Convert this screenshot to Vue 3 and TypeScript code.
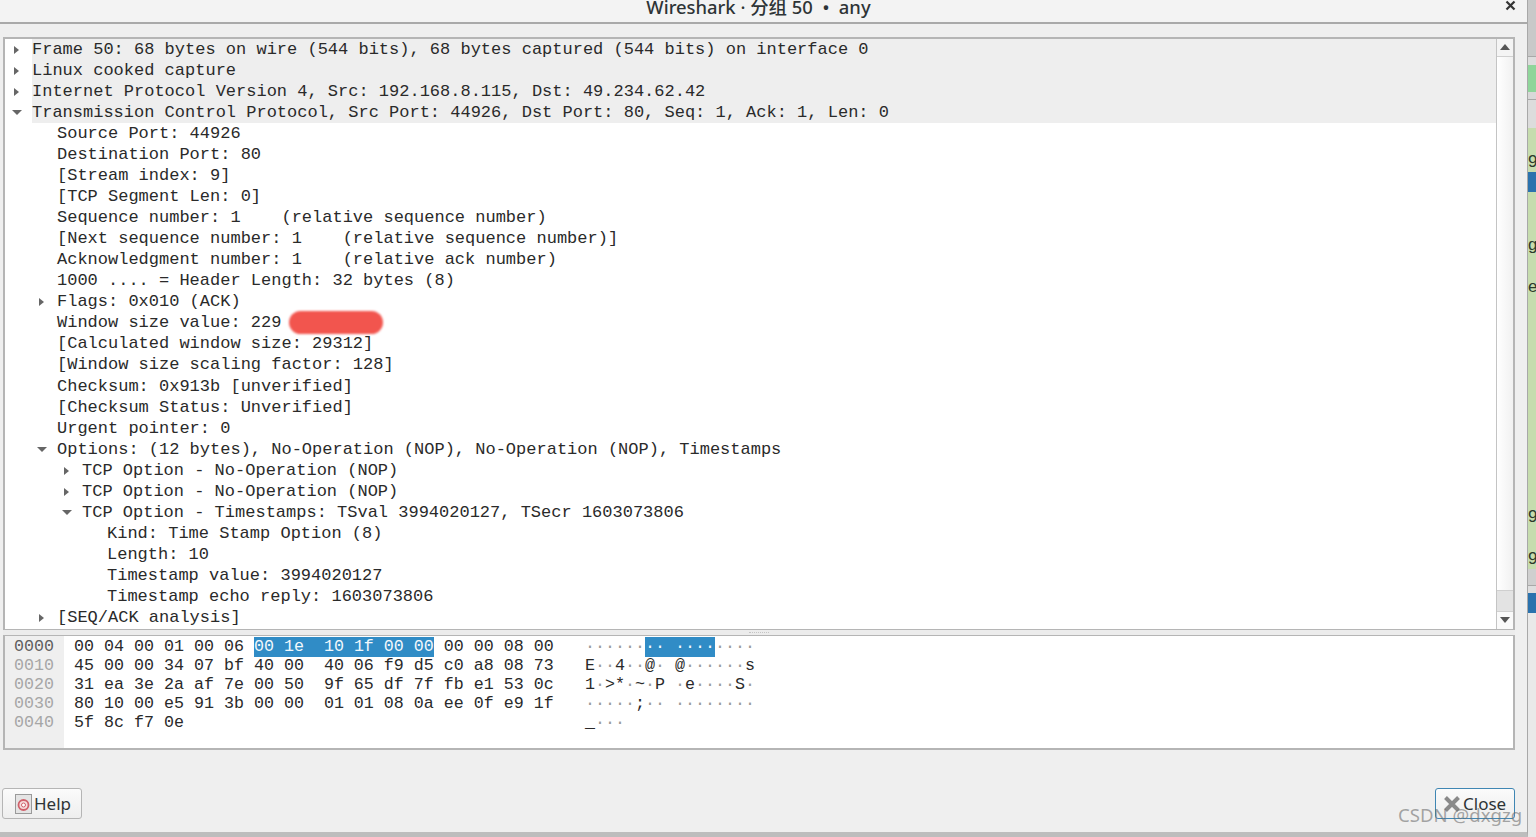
<script setup lang="ts">
interface Row { text: string; indent: number; arrow?: 'right' | 'down'; redact?: boolean; head?: boolean }
interface Seg { text: string; dim: boolean }

const rows: Row[] = [
  { text: 'Frame 50: 68 bytes on wire (544 bits), 68 bytes captured (544 bits) on interface 0', indent: 0, arrow: 'right', head: true },
  { text: 'Linux cooked capture', indent: 0, arrow: 'right', head: true },
  { text: 'Internet Protocol Version 4, Src: 192.168.8.115, Dst: 49.234.62.42', indent: 0, arrow: 'right', head: true },
  { text: 'Transmission Control Protocol, Src Port: 44926, Dst Port: 80, Seq: 1, Ack: 1, Len: 0', indent: 0, arrow: 'down', head: true },
  { text: 'Source Port: 44926', indent: 1 },
  { text: 'Destination Port: 80', indent: 1 },
  { text: '[Stream index: 9]', indent: 1 },
  { text: '[TCP Segment Len: 0]', indent: 1 },
  { text: 'Sequence number: 1    (relative sequence number)', indent: 1 },
  { text: '[Next sequence number: 1    (relative sequence number)]', indent: 1 },
  { text: 'Acknowledgment number: 1    (relative ack number)', indent: 1 },
  { text: '1000 .... = Header Length: 32 bytes (8)', indent: 1 },
  { text: 'Flags: 0x010 (ACK)', indent: 1, arrow: 'right' },
  { text: 'Window size value: 229', indent: 1, redact: true },
  { text: '[Calculated window size: 29312]', indent: 1 },
  { text: '[Window size scaling factor: 128]', indent: 1 },
  { text: 'Checksum: 0x913b [unverified]', indent: 1 },
  { text: '[Checksum Status: Unverified]', indent: 1 },
  { text: 'Urgent pointer: 0', indent: 1 },
  { text: 'Options: (12 bytes), No-Operation (NOP), No-Operation (NOP), Timestamps', indent: 1, arrow: 'down' },
  { text: 'TCP Option - No-Operation (NOP)', indent: 2, arrow: 'right' },
  { text: 'TCP Option - No-Operation (NOP)', indent: 2, arrow: 'right' },
  { text: 'TCP Option - Timestamps: TSval 3994020127, TSecr 1603073806', indent: 2, arrow: 'down' },
  { text: 'Kind: Time Stamp Option (8)', indent: 3 },
  { text: 'Length: 10', indent: 3 },
  { text: 'Timestamp value: 3994020127', indent: 3 },
  { text: 'Timestamp echo reply: 1603073806', indent: 3 },
  { text: '[SEQ/ACK analysis]', indent: 1, arrow: 'right' },
]

const offsets = ['0000', '0010', '0020', '0030', '0040']
const hexRows = [
  { pre: '00 04 00 01 00 06 ', sel: '00 1e  10 1f 00 00', post: ' 00 00 08 00' },
  { pre: '45 00 00 34 07 bf 40 00  40 06 f9 d5 c0 a8 08 73', sel: '', post: '' },
  { pre: '31 ea 3e 2a af 7e 00 50  9f 65 df 7f fb e1 53 0c', sel: '', post: '' },
  { pre: '80 10 00 e5 91 3b 00 00  01 01 08 0a ee 0f e9 1f', sel: '', post: '' },
  { pre: '5f 8c f7 0e', sel: '', post: '' },
]

function segs(s: string): Seg[] {
  const out: Seg[] = []
  for (const ch of s) {
    const dim = ch === '·'
    const last = out[out.length - 1]
    if (last && last.dim === dim) last.text += ch
    else out.push({ text: ch, dim })
  }
  return out
}

const asciiRows = [
  { pre: segs('······'), sel: '·· ····', post: segs('····') },
  { pre: segs('E··4··@· @······s'), sel: '', post: [] as Seg[] },
  { pre: segs('1·>*·~·P ·e····S·'), sel: '', post: [] as Seg[] },
  { pre: segs('·····;·· ········'), sel: '', post: [] as Seg[] },
  { pre: segs('_···'), sel: '', post: [] as Seg[] },
]
</script>

<template>
  <div class="screen">
    <div class="dialog">
      <header class="titlebar">
        <span class="title">Wireshark · 分组 50 &nbsp;•&nbsp; any</span>
        <svg class="x" width="11" height="11" viewBox="0 0 11 11">
          <path d="M1.5 1.5L9.5 9.5M9.5 1.5L1.5 9.5" stroke="#333" stroke-width="2.2" fill="none" />
        </svg>
      </header>

      <main class="body">
        <section class="tree">
          <div class="tree-rows">
            <div v-for="(r, i) in rows" :key="i" class="row" :class="{ head: r.head }">
              <span class="gutter" :class="'lvl' + r.indent">
                <i v-if="r.arrow" :class="r.arrow"></i>
              </span>
              <span class="txt">{{ r.text }}</span>
              <span v-if="r.redact" class="redact"></span>
            </div>
          </div>
          <div class="scroll">
            <div class="sbtn"><i class="up"></i></div>
            <div class="strack"></div>
            <div class="sthumb"></div>
            <div class="sbtn bottom"><i class="dn"></i></div>
          </div>
        </section>

        <div class="splitter"><span class="grip"></span></div>

        <section class="hex">
          <div class="offs">
            <div v-for="(o, i) in offsets" :key="o" class="hexline" :class="{ first: i === 0 }">{{ o }}</div>
          </div>
          <div class="bytes">
            <div v-for="(h, i) in hexRows" :key="i" class="hexline">{{ h.pre }}<span v-if="h.sel" class="sel">{{ h.sel }}</span>{{ h.post }}</div>
          </div>
          <div class="ascii">
            <div v-for="(a, i) in asciiRows" :key="i" class="hexline"><span v-for="(s, j) in a.pre" :key="j" :class="{ dim: s.dim }">{{ s.text }}</span><span v-if="a.sel" class="sel">{{ a.sel }}</span><span v-for="(s, j) in a.post" :key="'p' + j" :class="{ dim: s.dim }">{{ s.text }}</span></div>
          </div>
        </section>

        <footer class="buttons">
          <button class="btn help">
            <svg width="17" height="20" viewBox="0 0 17 20">
              <rect x="0.5" y="0.5" width="16" height="19" fill="#e4e4e4" stroke="#9a9a9a" />
              <circle cx="8.5" cy="11" r="5" fill="#f6dcdc" stroke="#d0606a" stroke-width="1.8" />
              <circle cx="8.5" cy="11" r="2" fill="#fff" stroke="#d0606a" />
            </svg>
            <span>Help</span>
          </button>
          <button class="btn close">
            <svg width="18" height="16" viewBox="0 0 18 16">
              <path d="M2.5 1.5L15.5 14.5M15.5 1.5L2.5 14.5" stroke="#8a8a8a" stroke-width="4" fill="none" />
            </svg>
            <span>Close</span>
          </button>
        </footer>
      </main>
      <span class="mark">CSDN @dxgzg</span>
    </div>

    <aside class="behind">
      <div class="b b-head"></div>
      <div class="b b-sep"></div>
      <div class="b b-green"></div>
      <div class="b b-grey"></div>
      <div class="b b-light"></div>
      <div class="b b-row b-r1"><span>9</span></div>
      <div class="b b-blue"></div>
      <div class="b b-row b-r2"><span>g</span></div>
      <div class="b b-row b-r3"><span>e</span></div>
      <div class="b b-row b-r4"><span>9</span></div>
      <div class="b b-row b-r5"><span>9</span></div>
      <div class="b b-grey2"></div>
      <div class="b b-sep2"></div>
      <div class="b b-blue"></div>
      <div class="b b-rest"></div>
    </aside>
  </div>
</template>

<style>
html, body { margin: 0; padding: 0; overflow: hidden; background: #fff; }
</style>

<style scoped>
.screen { width: 1536px; height: 837px; display: flex; overflow: hidden; font-family: "Liberation Sans", sans-serif; }
.dialog { position: relative; width: 1528px; height: 837px; flex: none; background: #efefef; display: flex; flex-direction: column; box-sizing: border-box; border-bottom: 5px solid #bdbdbd; border-right: 1px solid #a8a8a8; }
.titlebar { height: 24px; flex: none; box-sizing: border-box; border-bottom: 2px solid #a9a9a9; background: #f3f3f3; position: relative; display: flex; justify-content: center; overflow: hidden; }
.title { font-family: "Noto Sans", "Noto Sans CJK SC", sans-serif; font-size: 18.4px; font-weight: 500; color: #2e3436; line-height: 22px; position: relative; top: -4px; left: -5px; white-space: pre; }
.x { position: absolute; left: 1505px; top: 0; }
.body { flex: 1; display: flex; flex-direction: column; padding: 13px 12px 0 3px; min-height: 0; }
.tree { height: 593px; flex: none; box-sizing: border-box; border: 2px solid #b5b5b5; border-bottom-width: 1px; background: #fff; display: flex; overflow: hidden; }
.tree-rows { flex: 1; min-width: 0; }
.row { height: 21.04px; display: flex; align-items: center; font-family: "Liberation Mono", monospace; font-size: 17px; color: #2a2a2a; white-space: pre; }
.row.head .txt { flex: 1; background: #eeeeee; align-self: stretch; line-height: 21px; }
.gutter { flex: none; position: relative; height: 100%; }
.lvl0 { width: 27px; }
.lvl1 { width: 52px; }
.lvl2 { width: 77px; }
.lvl3 { width: 102px; }
.gutter i { position: absolute; width: 0; height: 0; }
.gutter i.right { border-left: 5px solid #666; border-top: 4px solid transparent; border-bottom: 4px solid transparent; right: 13px; top: 7px; }
.gutter i.down { border-top: 5px solid #666; border-left: 5px solid transparent; border-right: 5px solid transparent; right: 10px; top: 8px; }
.redact { width: 94px; height: 23px; margin-left: 8px; border-radius: 12px; background: #f2554e; filter: blur(1px); }
.scroll { width: 17px; flex: none; box-sizing: border-box; border-left: 1px solid #c4c4c4; background: linear-gradient(90deg, #ffffff, #f1f1f1); display: flex; flex-direction: column; }
.sbtn { height: 17px; flex: none; background: #f4f4f4; border-bottom: 1px solid #d0d0d0; position: relative; }
.sbtn.bottom { border-bottom: 0; border-top: 1px solid #d0d0d0; background: #fafafa; }
.sbtn i { position: absolute; left: 3px; width: 0; height: 0; border-left: 5px solid transparent; border-right: 5px solid transparent; }
.sbtn i.up { top: 5px; border-bottom: 6px solid #555; }
.sbtn i.dn { top: 5px; border-top: 6px solid #555; }
.strack { flex: 1; }
.sthumb { height: 20px; flex: none; background: #e3e3e3; border-top: 1px solid #cfcfcf; }
.splitter { height: 5px; flex: none; background: #ececec; display: flex; justify-content: center; align-items: flex-end; }
.grip { width: 20px; height: 1px; margin-bottom: 1px; border-top: 1px dotted #c4c4c4; }
.hex { height: 115px; flex: none; box-sizing: border-box; border: 2px solid #b5b5b5; border-top: 1px solid #b5b5b5; background: #fff; display: flex; font-family: "Liberation Mono", monospace; font-size: 16.67px; }
.offs { width: 59px; flex: none; box-sizing: border-box; background: #efefef; padding: 1px 0 0 9px; color: #a6a6a6; }
.offs .first { color: #5e5e5e; }
.bytes { width: 521px; flex: none; box-sizing: border-box; padding: 1px 0 0 10px; color: #2a2a2a; }
.ascii { flex: 1; padding-top: 1px; color: #2a2a2a; }
.dim { color: #9a9a9a; }
.hexline { height: 19px; line-height: 19px; white-space: pre; }
.sel { display: inline-block; background: #308cc6; color: #f2f8fc; height: 20px; }
.buttons { flex: 1; display: flex; justify-content: space-between; align-items: flex-end; padding-bottom: 13px; min-height: 0; }
.btn { height: 31px; box-sizing: border-box; display: flex; align-items: center; gap: 2px; font-family: "Noto Sans", sans-serif; font-size: 17px; color: #2e3436; background: linear-gradient(#fbfbfb, #eeeeee); border: 1px solid #b5b5b5; border-radius: 3px; padding: 0; }
.help { width: 80px; padding-left: 12px; margin-left: -1px; }
.close { width: 80px; padding-left: 7px; border-color: #3f86b3; }
.mark { position: absolute; left: 1398px; top: 802px; font-family: "Noto Sans", sans-serif; font-size: 18.6px; white-space: nowrap; color: rgba(110, 110, 110, 0.6); }
.behind { flex: 1; display: flex; flex-direction: column; min-width: 0; overflow: hidden; font-family: "Liberation Sans", sans-serif; font-size: 17px; color: #2c3a2c; }
.b { flex: none; }
.b-head { height: 57px; box-sizing: border-box; background: #c9c9c9; border-bottom: 1px solid #a8a8a8; }
.b-sep { height: 8px; background: #dddddd; }
.b-green { height: 27px; background: #8fd59a; }
.b-grey { height: 8px; box-sizing: border-box; background: #d8d8d8; border-bottom: 1px solid #a8a8a8; }
.b-light { height: 28px; background: #dcdcdc; }
.b-row { background: #c6dcae; box-sizing: border-box; display: flex; align-items: flex-end; line-height: 21px; }
.b-r1 { height: 44px; }
.b-blue { height: 20px; background: #2b72ad; }
.b-r2 { height: 63px; }
.b-r3 { height: 42px; }
.b-r4 { height: 230px; }
.b-r5 { height: 42px; }
.b-grey2 { height: 17px; box-sizing: border-box; background: #cfcfcf; border-bottom: 1px solid #a8a8a8; }
.b-sep2 { height: 7px; background: #dedede; }
.b-rest { flex: 1; background: #e9e9e9; }
</style>
